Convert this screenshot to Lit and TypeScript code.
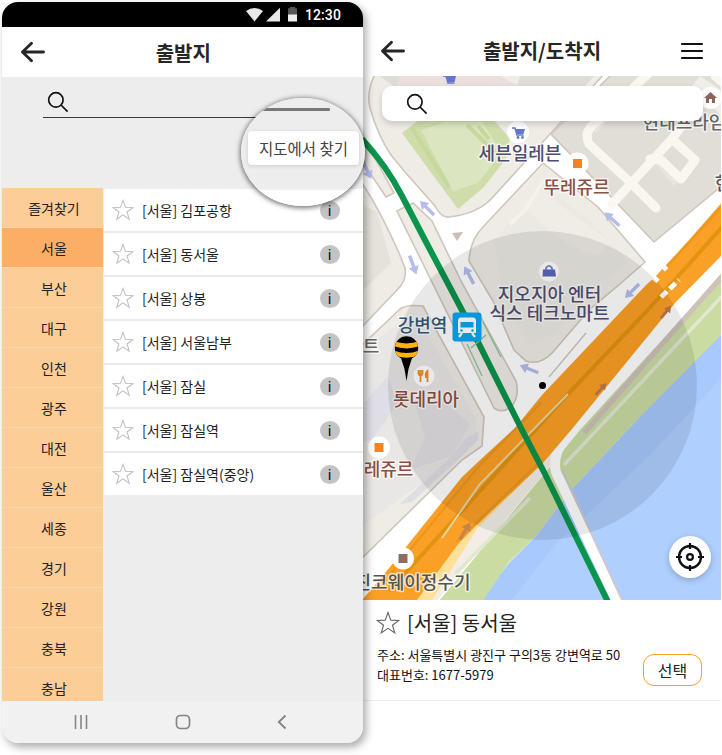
import { LitElement, html, css, svg } from "lit";
import { customElement, property, state } from "lit/decorators.js";
import { classMap } from "lit/directives/class-map.js";

const STAR = "M12 1.5 L14.8 9.1 L22.8 9.4 L16.4 14.2 L18.8 22 L12 17.4 L5.2 22 L7.6 14.2 L1.2 9.4 L9.2 9.1 Z";

const starIcon = (size: number, color: string) => html`
  <svg width=${size} height=${size} viewBox="0 0 24 24" fill="none" stroke=${color} stroke-width="1.1">
    <path d=${STAR} />
  </svg>`;

const backIcon = html`
  <svg width="26" height="22" viewBox="0 0 26 22" fill="none" stroke="#262626" stroke-width="2.9" stroke-linecap="round" stroke-linejoin="round">
    <path d="M2.500 11H23.500M11.500 2.300L2.500 11L11.500 19.700" />
  </svg>`;

const searchIcon = html`
  <svg width="22" height="22" viewBox="0 0 22 22" fill="none" stroke="#111" stroke-width="1.7">
    <circle cx="8.900" cy="8.900" r="7.200" />
    <path d="M14 14L20.600 20.600" />
  </svg>`;

@customElement("terminal-picker")
export class TerminalPicker extends LitElement {
  @state() private region = "서울";

  private regions = ["즐겨찾기", "서울", "부산", "대구", "인천", "광주", "대전", "울산", "세종", "경기", "강원", "충북", "충남"];
  private stops = ["[서울] 김포공항", "[서울] 동서울", "[서울] 상봉", "[서울] 서울남부", "[서울] 잠실", "[서울] 잠실역", "[서울] 잠실역(중앙)"];

  static styles = css`
    :host { display: block; width: 360.5px; height: 741px; position: relative; z-index: 2; }
    .screen { height: 100%; display: flex; flex-direction: column; border-radius: 16px; overflow: hidden; background: #ededed; box-shadow: 3px 4px 8px rgba(0,0,0,.34); }
    .status { height: 25px; flex: none; background: #000; display: flex; align-items: center; justify-content: flex-end; padding-right: 21.5px; }
    .status svg { margin-right: 7px; }
    .clock { color: #fff; font: 500 14px/25px Roboto, sans-serif; letter-spacing: .1px; position: relative; top: 1px; }
    header { height: 50px; flex: none; background: #fff; display: grid; grid-template-columns: 60px 1fr 58px; align-items: center; }
    header svg { margin-left: 18px; }
    h1 { margin: 0; padding-top: 1px; font-size: 20px; line-height: 28px; font-weight: 700; color: #262626; text-align: center; }
    .search { height: 41px; flex: none; margin: 0 32px 0 41px; box-sizing: border-box; border-bottom: 1.5px solid #3b3b3b; padding: 14px 0 0 4px; }
    .body { margin-top: 70px; flex: 1; min-height: 0; display: flex; }
    nav { width: 101px; flex: none; background: #fccd97; overflow: hidden; }
    .region { height: 40px; box-sizing: border-box; border-bottom: 1px solid #fbd5a8; font-size: 14px; line-height: 41px; text-align: center; padding-left: 3px; }
    .region.active { background: #fdae66; }
    ul { flex: 1; margin: 1px 0 0 1px; padding: 0; list-style: none; }
    li { height: 44px; box-sizing: border-box; border-bottom: 2px solid #e9e9e9; background: #fff; display: flex; align-items: center; padding: 0 23px 0 8px; font-size: 14px; color: #1e1e1e; }
    li:last-child { height: 42px; border: 0; }
    li span { flex: 1; margin-left: 8px; }
    .info { width: 20px; height: 19px; border-radius: 50%; background: #c3c3c3; color: #111; font: normal 15px/20px Roboto, sans-serif; text-align: center; }
    .system { height: 42px; flex: none; background: #f1f1f1; display: flex; align-items: center; justify-content: space-between; padding: 0 76px 0 71px; }
    .loupe { position: absolute; left: 239px; top: 96px; width: 124px; height: 108px; border-radius: 50%; overflow: hidden; background: linear-gradient(#ededed 0 91px, #fff 93px); box-shadow: 0 1px 5px 1px rgba(0,0,0,.55); display: flex; flex-direction: column; }
    .rule { width: 72px; height: 2.500px; margin: 10px 0 0 17px; background: #787878; border-radius: 1px; }
    .find { margin: 20px 6px 0 7px; height: 34px; border-radius: 4px; background: #fff; box-shadow: 0 1px 4px rgba(0,0,0,.14); color: #444; font-size: 15.500px; line-height: 35px; text-align: center; white-space: nowrap; }
  `;

  render() {
    return html`
      <div class="screen">
        <div class="status">
          <svg width="53" height="16" viewBox="0 0 53 16">
            <path d="M1 4Q9.500-2.200 18 4L9.500 14.500Z" fill="#e8e8e8" />
            <path d="M35 .8V14.500H21Z" fill="#e8e8e8" />
            <path d="M43 1.200H45V0H50V1.200H52V8H43Z" fill="#555" />
            <path d="M43 7.500H52V14.500H43Z" fill="#eee" />
          </svg>
          <span class="clock">12:30</span>
        </div>
        <header>${backIcon}<h1>출발지</h1></header>
        <div class="search">${searchIcon}</div>
        <div class="body">
          <nav>
            ${this.regions.map((r) => html`
              <div class=${classMap({ region: true, active: r === this.region })} @click=${() => (this.region = r)}>${r}</div>`)}
          </nav>
          <ul>
            ${this.stops.map((s) => html`<li>${starIcon(22, "#bdbdbd")}<span>${s}</span><i class="info">i</i></li>`)}
          </ul>
        </div>
        <div class="system">
          <svg width="16" height="16" viewBox="0 0 16 16" stroke="#858585" stroke-width="1.6"><path d="M2.500 1V15M8 1V15M13.500 1V15" /></svg>
          <svg width="16" height="16" viewBox="0 0 16 16" fill="none" stroke="#858585" stroke-width="1.7"><rect x="1.500" y="1.500" width="13" height="13" rx="4" /></svg>
          <svg width="10" height="16" viewBox="0 0 10 16" fill="none" stroke="#858585" stroke-width="1.9"><path d="M8.500 1.500L1.800 8L8.500 14.500" /></svg>
        </div>
      </div>
      <div class="loupe"><div class="rule"></div><div class="find">지도에서 찾기</div></div>
    `;
  }
}

interface Label { t: string; x: number; y: number; c: string; }

@customElement("city-map")
export class CityMap extends LitElement {
  @property({ type: Number }) radius = 154.5;

  private labels: Label[] = [
    { t: "세븐일레븐", x: 520, y: 160, c: "#4c4d72" },
    { t: "뚜레쥬르", x: 576.5, y: 193.5, c: "#8b5144" },
    { t: "현대프라임", x: 684, y: 129, c: "#666" },
    { t: "현", x: 723, y: 190, c: "#555" },
    { t: "지오지아 엔터", x: 549.5, y: 301, c: "#505070" },
    { t: "식스 테크노마트", x: 549.5, y: 319.5, c: "#505070" },
    { t: "강변역", x: 422.5, y: 331.5, c: "#34597b" },
    { t: "트", x: 371, y: 352.5, c: "#666" },
    { t: "롯데리아", x: 426, y: 405.5, c: "#8b5144" },
    { t: "레쥬르", x: 388.5, y: 476, c: "#8b5144" },
    { t: "진코웨이정수기", x: 412.5, y: 588.5, c: "#555" },
  ];

  static styles = css`
    :host { display: block; }
    svg { display: block; width: 359px; height: 524px; }
    .label { font-size: 18px; font-weight: 500; text-anchor: middle; paint-order: stroke; stroke: rgba(255,255,255,.7); stroke-width: 3px; stroke-linejoin: round; }
    .curb { stroke: #cfc6be; stroke-width: 1.6; }
  `;

  private arrow(x: number, y: number, angle: number, color = "#b4bdec", scale = 1) {
    return svg`<path transform="translate(${x} ${y}) rotate(${angle}) scale(${scale})" fill=${color} d="M0 -10L5 -2H1.700V10H-1.700V-2H-5Z" />`;
  }

  render() {
    return html`
      <svg viewBox="362 76 359 524">
        <rect x="362" y="76" width="359" height="524" fill="#fff" />
        <!-- city blocks -->
        <g class="curb" fill="#efece6">
          <path d="M375 74Q366 92 370 108Q378 136 391 155L405 172L435 206Q441 218 449 217Q478 214 493 197L542 143L604 74Z" />
          <path d="M360 180Q378 206 399 253L405 268Q407 280 398 289L360 329Z" />
          <path d="M360 158L386 197L394 193L376 160L360 140Z" />
          <path d="M397 211L413 203L432 221L462 283L516 381Q520 397 511 407Q502 414 494 408Z" />
          <path d="M360 347L400 309Q407 304 423 306L484 417L482 446L462 460L360 560Z" />
          <path d="M469 261Q470 240 483 227L543 163L598 207L645 262L620 284L589 310L553 352Q540 366 526 361L514 350L493 301Z" />
          <path d="M551 134L612 74H724V184L654 242Z" fill="#e1ddd7" />
        </g>
        <path d="M380 76L400 91L430 82L470 76Z" fill="#dfdbd6" />
        <path d="M400 76L394 92H530L500 76Z" fill="#eadfdc" />
        <path d="M520 76H594L580 92L515 92Z" fill="#e0ddd8" />
        <path d="M363 205L377 212L391 263L363 290Z" fill="#e5e2dc" />
        <path d="M363 350L405 318L421 322L476 420V440L461 455L363 525Z" fill="#e9e7e5" />
        <path d="M363 404L388 376L397 404L372 440L363 442ZM400 504L452 456L464 440L478 432V440L461 457L412 502Z" fill="#dfdde5" />
        <path d="M410 470L425 438L415 404L440 398L470 424L452 456Z" fill="#e2e0e2" />
        <path d="M494 240L543 185L592 222L628 262L586 296L551 335L530 345L506 306Z" fill="#ece9e3" />
        <path d="M520 205L541 190L610 242L600 256L584 252L560 239Z" fill="#f2ece7" opacity=".7" />
        <path d="M700 76L724 92V118L691 87Z" fill="#f0eee8" />
        <path d="M592 129L624 92M655 90L640 104M660 160L678 182" stroke="#e8e6df" stroke-width="12" />
        <!-- park -->
        <path d="M402 133L429 112H486L510 138L506 159L483 188L458 209Z" fill="#cfddaa" />
        <path d="M421 130L446 122H482L502 152L478 183L453 191Z" fill="#dbe5bf" />
        <path d="M412 128L449 187M467 125L500 157M478 126L489 139" stroke="#c6d89c" stroke-width="4" />
        <!-- footpaths -->
        <g fill="none" stroke="#faf7f1" stroke-width="9" stroke-linecap="round" stroke-linejoin="round">
          <path d="M648 74L592 126Q584 133 589 144L631 183L656 208" />
          <path d="M612 204L672 139L695 160L681 179L661 160L650 159M672 139L686 120M715 76L724 84" />
        </g>
        <path d="M510 224L525 210L544 180" fill="none" stroke="#f5f1eb" stroke-width="4" />
        <path d="M452 233L463 232L457 241Z" fill="#c7beb7" />
        <!-- river and bank -->
        <path d="M724 326L635 422L570 491L536 536L509 563L480 602H724Z" fill="#afcfff" />
        <path d="M724 326L635 422L570 491L536 536L509 563L480 602H510L555 545L650 455L724 375Z" fill="#a3c4f9" opacity=".55" />
        <path d="M724 272L580 430L540 479L438 602H482L509 562L536 536L570 491L635 422L724 332Z" fill="#cbdca3" />
        <path d="M724 262L570 430L558 455L540 478L436 602H418L470 535L543 462L724 252Z" fill="#f2eee7" />
        <path d="M724 274L584 433" stroke="#cdc2b8" stroke-width="5" />
        <path d="M724 294L564 465M530 498L455 574" fill="none" stroke="#e2e8cf" stroke-width="3.500" />
        <path d="M724 260L580 421Q550 449 556 472L617 602" fill="none" stroke="#fff" stroke-width="10" />
        <path d="M562 470L623 602" stroke="#cfc8d0" stroke-width="2" fill="none" />
        <!-- expressway -->
        <path d="M542 397L515 430L480 462L392 566L360 602H431L477 529L542 463Z" fill="#ffdf9a" />
        <path d="M724 200L689 240L655 277L647 284L542 395L515 428L479 461L462 477L390 567L359 604H414L459 543L476 526L543 463L572 429L675 303L724 253Z" fill="#fba026" />
        <path d="M724 225L646 312L568 394L470 502L389 591" fill="none" stroke="#e2930f" stroke-width="4" />
        <path d="M568 394L480 484L442 538" fill="none" stroke="#ead6a0" stroke-width="2" />
        <path d="M542 402L479 466L392 572M543 459L456 542M724 204L664 270" fill="none" stroke="#e9971c" stroke-width="2" />
        <path d="M652 276L660 283M661 264L668 271M661 297L679 280" stroke="#fff" stroke-width="5" stroke-dasharray="8 4" fill="none" />
        <path d="M549 377L586 333" stroke="#cbc3bc" fill="none" stroke-width="1.300" />
        <!-- metro -->
        <path d="M362 139Q386 165 402 196L426 242L464 314L522 430L543 470L609 604" fill="none" stroke="#0b944b" stroke-width="6" />
        <path d="M483 322L501 357M467 344L482 376M471 348L486 335" stroke="#83c99c" fill="none" stroke-width="1.300" />
        ${this.arrow(427, 208, -45)}${this.arrow(413, 265, 160)}${this.arrow(469, 275, -28)}
        ${this.arrow(529, 369, -68)}${this.arrow(612, 219, -48)}${this.arrow(632, 291, 225)}
        ${this.arrow(367, 170, 155)}${this.arrow(465, 531, 32, "#c78349")}${this.arrow(666, 312, 40, "#bc7b4a", 0.8)}${this.arrow(601, 389, 42, "#bc7b4a", 0.8)}
        <!-- place badges -->
        <g fill="#fff">
          <circle cx="518" cy="132" r="11" /><circle cx="577.500" cy="163.500" r="11" /><circle cx="549" cy="271.500" r="10" />
          <circle cx="424" cy="376" r="10.500" /><circle cx="379" cy="447.500" r="11" /><circle cx="403" cy="558.500" r="11" /><circle cx="710.500" cy="98" r="11" />
        </g>
        <path d="M573 159H582V168H573ZM374.500 443H383.500V452H374.500Z" fill="#fb821b" />
        <path d="M398.500 554H407.500V563H398.500Z" fill="#8e6c62" />
        <path d="M710.500 92L717 98H715V103H712V99H709V103H706V98H704Z" fill="#8e6457" />
        <g fill="none" stroke="#6478c8" stroke-width="1.600">
          <path d="M512 128H515L517 135H523.500" />
          <path d="M443 76H446L448 83H454.500" />
          <path d="M546 270V268Q549 263.500 552 268V270" />
        </g>
        <path d="M515.500 129H525L523.500 134H517ZM446.500 76H456L454.500 82H448Z" fill="#6478c8" />
        <circle cx="518" cy="137.500" r="1.400" fill="#6478c8" /><circle cx="522.500" cy="137.500" r="1.400" fill="#6478c8" />
        <path d="M543 269.500H555L556 276.500H542.500Z" fill="#5b65be" />
        <path d="M418.500 370V374Q420.500 377 422.500 374V370M420.500 370V382M427.500 382V371Q425 373 426 377H428" fill="none" stroke="#f08a32" stroke-width="1.800" />
        <!-- station -->
        <rect x="452.500" y="312.500" width="29" height="29" rx="3" fill="#0ba6f0" />
        <path d="M461 317.500H473Q476 317.500 476 321V333H458V321Q458 317.500 461 317.500Z" fill="#fff" /><path d="M460.500 322H473.500V327.500H460.500Z" fill="#0ba6f0" />
        <circle cx="461.500" cy="330.500" r="1.200" fill="#0ba6f0" /><circle cx="472.500" cy="330.500" r="1.200" fill="#0ba6f0" />
        <path d="M462 333L459 337M472 333L475 337" stroke="#fff" stroke-width="2.200" />
        ${this.labels.map((l) => svg`<text class="label" x=${l.x} y=${l.y} fill=${l.c}>${l.t}</text>`)}
        <!-- search area -->
        <circle cx="542.500" cy="385.500" r=${this.radius} fill="#000" opacity=".09" />
        <circle cx="542.500" cy="385.500" r="3.500" fill="#000" />
        <!-- bee pin -->
        <clipPath id="bee"><circle cx="406.500" cy="348" r="11.700" /></clipPath>
        <path d="M400 355H413L408.500 369L406.500 381L404.500 369Z" fill="#000" />
        <g clip-path="url(#bee)">
          <rect x="394" y="336" width="25" height="25" fill="#000" />
          <path d="M393 341Q406.500 346 420 341V346Q406.500 351 393 346ZM393 350Q406.500 356 420 350V354.500Q406.500 361 393 354.500Z" fill="#ffb40a" />
        </g>
      </svg>
    `;
  }
}

@customElement("app-root")
export class AppRoot extends LitElement {
  static styles = css`
    :host { display: flex; width: 722px; height: 755px; overflow: hidden; background: #fff; color: #222; font-family: "Noto Sans CJK KR", "Noto Sans", sans-serif; }
    terminal-picker { margin: 2px 0 0 2px; flex: none; }
    main { width: 359px; flex: none; margin-left: -.5px; }
    header { height: 76px; display: grid; grid-template-columns: 61px 1fr 60px; align-items: center; box-sizing: border-box; padding-top: 25px; }
    header svg:first-child { margin-left: 18px; }
    header svg:last-child { justify-self: end; margin-right: 17px; }
    h1 { margin: 0; font-size: 20px; font-weight: 700; line-height: 50px; color: #262626; text-align: center; }
    .map { position: relative; height: 524px; }
    .search { position: absolute; left: 20px; right: 18px; top: 10px; height: 35px; border-radius: 10px; background: #fff; box-shadow: 0 3px 6px rgba(0,0,0,.16); display: flex; align-items: center; padding-left: 24px; box-sizing: border-box; }
    .locate { position: absolute; right: 10px; bottom: 22px; width: 42px; height: 42px; padding: 0; border: 0; border-radius: 50%; background: #fff; box-shadow: 0 2px 6px rgba(0,0,0,.22); display: grid; place-items: center; }
    .card { height: 101px; box-sizing: border-box; border-bottom: 1px solid #eee; display: flex; justify-content: space-between; padding: 9px 19px 0 15px; }
    .name { display: flex; align-items: center; gap: 7px; height: 28px; margin-left: -1px; font-size: 20px; line-height: 28px; }
    .info { margin-top: 8px; font-size: 13px; line-height: 20px; color: #111; white-space: nowrap; }
    .pick { align-self: flex-start; margin-top: 45px; width: 59px; height: 32px; box-sizing: border-box; border: 1.4px solid #f9a41a; border-radius: 11px; background: #fff; padding: 0; font: 16px/28px "Noto Sans CJK KR", sans-serif; color: #222; }
  `;

  render() {
    return html`
      <terminal-picker></terminal-picker>
      <main>
        <header>
          ${backIcon}
          <h1>출발지/도착지</h1>
          <svg width="24" height="18" viewBox="0 0 24 18" stroke="#111" stroke-width="2.200" stroke-linecap="round"><path d="M2 2H22M2 9H22M2 16H22" /></svg>
        </header>
        <div class="map">
          <city-map></city-map>
          <div class="search">${searchIcon}</div>
          <button class="locate" aria-label="현재 위치">
            <svg width="28" height="28" viewBox="0 0 28 28" fill="none" stroke="#111" stroke-width="2.400">
              <circle cx="14" cy="14" r="11" /><circle cx="14" cy="14" r="2.900" stroke-width="2.200" />
              <path d="M14 0V6M14 22V28M0 14H6M22 14H28" stroke-width="2.200" />
            </svg>
          </button>
        </div>
        <section class="card">
          <div>
            <div class="name">${starIcon(24, "#666")}<span>[서울] 동서울</span></div>
            <div class="info">주소: 서울특별시 광진구 구의3동 강변역로 50<br />대표번호: 1677-5979</div>
          </div>
          <button class="pick">선택</button>
        </section>
      </main>
    `;
  }
}
